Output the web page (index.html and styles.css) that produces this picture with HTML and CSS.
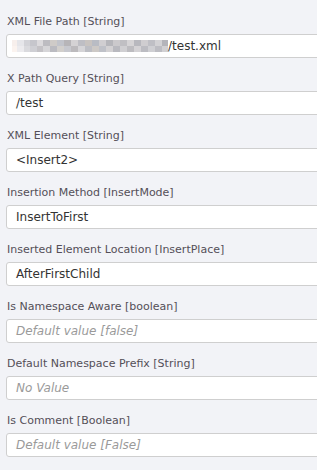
FILE: index.html
```html
<!DOCTYPE html>
<html lang="en">
<head>
    <meta charset="utf-8">
    <title>Properties</title>
    <link rel="stylesheet" href="styles.css">
</head>
<body>
    <div class="prop-list">
        <div class="prop">
            <label class="prop-label">XML File Path [String]</label>
            <div class="prop-input"><span class="blurred"></span>/test.xml</div>
        </div>
        <div class="prop">
            <label class="prop-label">X Path Query [String]</label>
            <div class="prop-input">/test</div>
        </div>
        <div class="prop">
            <label class="prop-label">XML Element [String]</label>
            <div class="prop-input">&lt;Insert2&gt;</div>
        </div>
        <div class="prop">
            <label class="prop-label">Insertion Method [InsertMode]</label>
            <div class="prop-input">InsertToFirst</div>
        </div>
        <div class="prop">
            <label class="prop-label">Inserted Element Location [InsertPlace]</label>
            <div class="prop-input">AfterFirstChild</div>
        </div>
        <div class="prop">
            <label class="prop-label">Is Namespace Aware [boolean]</label>
            <div class="prop-input placeholder">Default value [false]</div>
        </div>
        <div class="prop">
            <label class="prop-label">Default Namespace Prefix [String]</label>
            <div class="prop-input placeholder">No Value</div>
        </div>
        <div class="prop">
            <label class="prop-label">Is Comment [Boolean]</label>
            <div class="prop-input placeholder">Default value [False]</div>
        </div>
    </div>
</body>
</html>
```

FILE: styles.css
```css
body {
    margin: 0;
    padding: 0;
    background-color: #f2f3f7;
    font-family: "DejaVu Sans", Verdana, sans-serif;
    overflow: hidden;
}

.prop-list {
    display: flex;
    flex-direction: column;
    padding: 15px 0 0 6px;
    width: 317px;
    box-sizing: border-box;
    overflow: hidden;
}

.prop {
    display: flex;
    flex-direction: column;
    gap: 5px;
    height: 57px;
    margin-right: -20px;
}

.prop-label {
    font-size: 11px;
    color: #544f58;
    padding-left: 1px;
    line-height: 14px;
    white-space: nowrap;
}

.prop-input {
    height: 22px;
    background-color: #fff;
    border: 1px solid #cfcfcf;
    border-radius: 3px;
    padding-left: 9px;
    font-size: 12px;
    color: #333;
    display: flex;
    align-items: center;
}

.prop-input.placeholder {
    font-style: italic;
    color: #9a9a9a;
}

/* pixelated (redacted) part of the path */
.blurred {
    display: inline-block;
    width: 156px;
    height: 12px;
    margin-left: -4px;
    background:
        linear-gradient(90deg,
            #f7efec 0 5px, #e6e6ea 5px 12px, #d3d3d8 12px 18px, #c6c6cc 18px 25px,
            #dcdadd 25px 31px, #bdbcc1 31px 38px, #cfcbc8 38px 45px, #c2c4cb 45px 52px,
            #b7b5b8 52px 59px, #d4d2d4 59px 66px, #bebec4 66px 73px, #c8c3c0 73px 80px,
            #b9bcc4 80px 87px, #d0ced1 87px 94px, #b6b6bb 94px 101px, #cbc9cc 101px 108px,
            #c0bfc3 108px 115px, #d6d4d6 115px 122px, #b8b8be 122px 129px, #cfcdd0 129px 136px,
            #bfbfc5 136px 143px, #d3d2d5 143px 150px, #b4b4ba 150px 156px)
            0 0 / 100% 6px no-repeat,
        linear-gradient(90deg,
            #fbf3ef 0 5px, #ecebee 5px 12px, #dadade 12px 18px, #cfcfd4 18px 25px,
            #c4c2c6 25px 31px, #d6d5d8 31px 38px, #bbbbc1 38px 45px, #d2cfcc 45px 52px,
            #c7c8ce 52px 59px, #bcbabd 59px 66px, #d5d4d7 66px 73px, #bdbec4 73px 80px,
            #cdc9c6 80px 87px, #bfc1c8 87px 94px, #d3d1d3 94px 101px, #b9b9bf 101px 108px,
            #d0cfd2 108px 115px, #bdbcc0 115px 122px, #d4d2d5 122px 129px, #bcbcc2 129px 136px,
            #cfcfd3 136px 143px, #bdbdc3 143px 150px, #d1d0d3 150px 156px)
            0 6px / 100% 6px no-repeat;
}
```
